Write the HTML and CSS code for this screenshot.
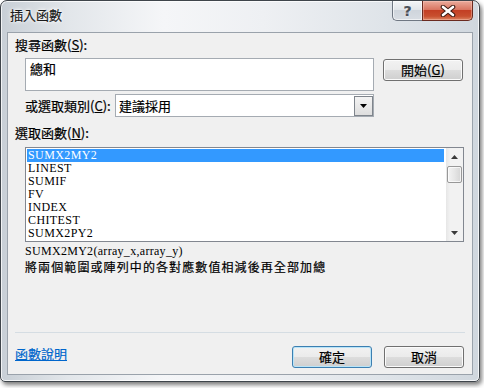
FILE: index.html
```html
<!DOCTYPE html>
<html>
<head>
<meta charset="utf-8">
<title>插入函數</title>
<link rel="stylesheet" href="styles.css">
</head>
<body>
<div class="window">
  <div class="titlebar">
    <span class="title">插入函數</span>
    <div class="caption-btns">
      <div class="cbtn help">?</div>
      <div class="cbtn close">
        <svg width="16" height="12" viewBox="0 0 16 12"><path d="M3 2 L13 10 M13 2 L3 10" stroke="#3d1a12" stroke-width="4.6" stroke-linecap="round"/><path d="M3 2 L13 10 M13 2 L3 10" stroke="#ffffff" stroke-width="2.6" stroke-linecap="round"/></svg>
      </div>
    </div>
  </div>
  <div class="client">
    <div class="label lbl-search">搜尋函數(<u>S</u>):</div>
    <div class="row search-row">
      <div class="textbox">總和</div>
      <div class="btn go">開始(<u>G</u>)</div>
    </div>
    <div class="row cat-row">
      <div class="label cat-label">或選取類別(<u>C</u>):</div>
      <div class="combo">
        <span class="combo-text">建議採用</span>
        <div class="combo-btn"><svg width="7" height="4" viewBox="0 0 7 4"><path d="M0 0 H7 L3.5 4 Z" fill="#000"/></svg></div>
      </div>
    </div>
    <div class="label lbl-fn">選取函數(<u>N</u>):</div>
    <div class="listbox">
      <div class="items">
        <div class="item sel">SUMX2MY2</div>
        <div class="item">LINEST</div>
        <div class="item">SUMIF</div>
        <div class="item">FV</div>
        <div class="item">INDEX</div>
        <div class="item">CHITEST</div>
        <div class="item">SUMX2PY2</div>
      </div>
      <div class="scrollbar">
        <div class="sb-btn"><svg width="7" height="4" viewBox="0 0 7 4"><path d="M3.5 0 L7 4 H0 Z" fill="#3a3a3a"/></svg></div>
        <div class="thumb"></div>
        <div class="sb-track"></div>
        <div class="sb-btn"><svg width="7" height="4" viewBox="0 0 7 4"><path d="M0 0 H7 L3.5 4 Z" fill="#3a3a3a"/></svg></div>
      </div>
    </div>
    <div class="desc">
      <div class="sig">SUMX2MY2(array_x,array_y)</div>
      <div class="info">將兩個範圍或陣列中的各對應數值相減後再全部加總</div>
    </div>
    <div class="spacer"></div>
    <div class="sep"></div>
    <div class="footer">
      <a class="link" href="#">函數說明</a>
      <div class="btn ok">確定</div>
      <div class="btn cancel">取消</div>
    </div>
  </div>
</div>
</body>
</html>
```

FILE: styles.css
```css
* { box-sizing: border-box; }
html, body { margin: 0; padding: 0; background: #ffffff; }
body {
  width: 484px;
  height: 388px;
  overflow: hidden;
  font-family: "Noto Sans CJK TC", "Noto Sans", sans-serif;
  font-size: 13px;
  color: #000;
  -webkit-text-stroke: 0.2px currentColor;
}
.window {
  width: 480px;
  height: 382px;
  border: 1px solid #3f454b;
  border-radius: 7px 7px 5px 5px;
  box-shadow: 2px 3px 4px rgba(0,0,0,0.5), inset 0 0 0 1px rgba(255,255,255,0.75);
  background: linear-gradient(90deg, #c8cfd6 0%, #e2e6ea 14%, #f5f6f8 34%, #eef0f3 55%, #dfe4e9 80%, #d0d7de 100%);
  display: flex;
  flex-direction: column;
  overflow: hidden;
}
.titlebar {
  height: 31px;
  display: flex;
  flex-shrink: 0;
}
.title {
  margin: 6px 0 0 9px;
  line-height: 16px;
  font-size: 13px;
  color: #1b1b1b;
  text-shadow: 0 0 5px #fff, 0 0 3px #fff, 0 0 1px #fff;
}
.caption-btns {
  margin-left: auto;
  margin-right: 6px;
  display: flex;
  height: 20px;
}
.cbtn {
  height: 20px;
  display: flex;
  align-items: center;
  justify-content: center;
}
.help {
  width: 30px;
  border: 1px solid #6f7782;
  border-top: none;
  border-right: none;
  border-radius: 0 0 0 5px;
  background: linear-gradient(#f3f5f7 0%, #e2e6ea 45%, #cfd5dc 50%, #d8dde3 100%);
  box-shadow: inset 0 0 0 1px rgba(255,255,255,0.6);
  color: #4a5058;
  font-family: "DejaVu Sans", sans-serif;
  font-weight: bold;
  font-size: 14px;
  text-shadow: 0 0 2px #fff;
}
.close {
  width: 51px;
  border: 1px solid #6a2a1f;
  border-top: none;
  border-radius: 0 0 5px 0;
  background: linear-gradient(#eaab9c 0%, #d97662 45%, #c33f24 50%, #c84f2f 80%, #dc8462 100%);
  box-shadow: inset 0 0 0 1px rgba(255,210,200,0.4);
}
.client {
  flex: 1;
  margin: 0 6px 6px 6px;
  border: 1px solid #9aa2ab;
  background: #f0f0f0;
  display: flex;
  flex-direction: column;
}
.label { line-height: 16px; white-space: nowrap; }
.lbl-search { margin: 4px 0 0 7px; }
.row { display: flex; margin-left: 17px; }
.search-row { margin-top: 5px; height: 33px; }
.textbox {
  width: 349px;
  height: 33px;
  border: 1px solid #a5abb2;
  background: #fff;
  padding: 2px 4px;
  line-height: 16px;
}
.btn {
  width: 80px;
  height: 22px;
  border: 1px solid #707070;
  border-radius: 3px;
  background: linear-gradient(#f2f2f2 0%, #ebebeb 50%, #dddddd 50%, #cfcfcf 100%);
  box-shadow: inset 0 0 0 1px #fbfbfb;
  display: flex;
  align-items: center;
  justify-content: center;
  line-height: 16px;
  white-space: nowrap;
}
.go { margin: 1px 0 0 9px; }
.cat-row { margin-top: 3px; height: 23px; }
.cat-label { width: 90px; line-height: 23px; }
.combo {
  width: 259px;
  height: 23px;
  border: 1px solid #a5abb2;
  background: #fff;
  display: flex;
  align-items: center;
  padding-left: 3px;
}
.combo-text { flex: 1; line-height: 21px; }
.combo-btn {
  width: 19px;
  height: 20px;
  margin: 1px 0 0 0;
  border: 1px solid #7f858c;
  background: linear-gradient(#f3f3f3, #dedede);
  display: flex;
  align-items: center;
  justify-content: center;
}
.lbl-fn { margin: 8px 0 0 7px; }
.listbox {
  margin: 6px 0 0 17px;
  width: 439px;
  height: 95px;
  border: 1px solid #828790;
  background: #fff;
  display: flex;
}
.items { flex: 1; padding: 1px 2px 0 1px; }
.item {
  height: 13px;
  line-height: 13px;
  font-family: "Liberation Serif", serif;
  font-size: 12px;
  letter-spacing: 0.4px;
  padding-left: 1px;
  white-space: nowrap;
  -webkit-text-stroke: 0;
}
.item.sel { background: #3399ff; color: #fff; }
.scrollbar {
  width: 17px;
  display: flex;
  flex-direction: column;
  background: linear-gradient(90deg, #e6e6e6 0%, #f2f2f2 25%, #f2f2f2 100%);
}
.sb-btn {
  height: 17px;
  display: flex;
  align-items: center;
  justify-content: center;
}
.thumb {
  height: 17px;
  margin: 1px 1px 0 1px;
  border: 1px solid #989898;
  border-radius: 2px;
  background: linear-gradient(90deg, #f4f4f4 0%, #e6e6e6 50%, #d5d5d5 100%);
  box-shadow: inset 0 0 0 1px rgba(255,255,255,0.7);
}
.sb-track { flex: 1; }
.desc { margin: 3px 0 0 17px; white-space: nowrap; }
.sig {
  font-family: "Liberation Serif", serif;
  font-size: 12px;
  letter-spacing: 0.3px;
  line-height: 12px;
  -webkit-text-stroke: 0;
}
.info { margin-top: 1px; line-height: 17px; font-size: 12px; letter-spacing: 1.1px; }
.spacer { flex: 1; }
.sep { height: 1px; margin: 0 7px; background: #d5dde3; }
.footer {
  display: flex;
  align-items: flex-start;
  padding: 13px 8px 6px 7px;
}
.link {
  color: #0066cc;
  text-decoration: underline;
  margin-right: auto;
  line-height: 16px;
}
.ok {
  border-color: #3c7fb1;
  box-shadow: inset 0 0 0 1px #b8e4f8;
}
.cancel { margin-left: 12px; }
```
